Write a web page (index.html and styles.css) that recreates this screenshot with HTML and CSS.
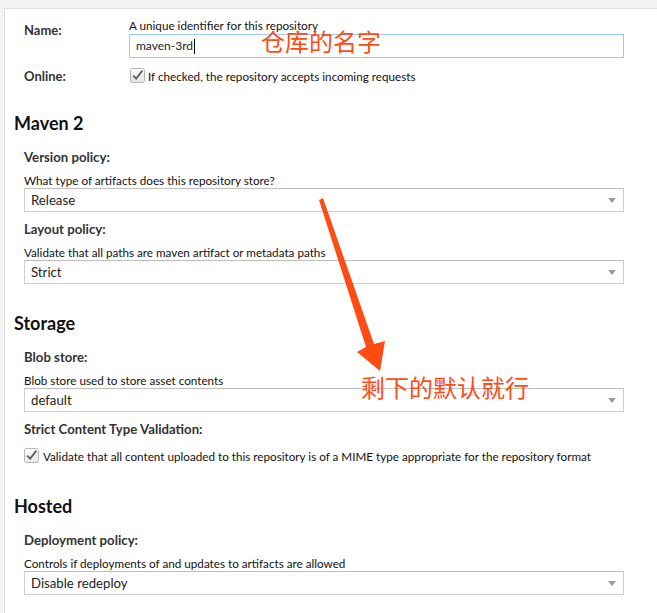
FILE: index.html
```html
<!DOCTYPE html>
<html>
<head>
<meta charset="utf-8">
<link rel="stylesheet" href="styles.css">
</head>
<body>
<div class="panel">
  <div class="row name-row">
    <div class="row-label">Name:</div>
    <div class="row-field">
      <div class="help">A unique identifier for this repository</div>
      <div class="input">maven-3rd<span class="caret"></span></div>
    </div>
  </div>
  <div class="row online-row">
    <div class="row-label">Online:</div>
    <div class="check-line">
      <svg class="cb" width="15" height="15" viewBox="0 0 15 15"><defs><linearGradient id="g1" x1="0" y1="0" x2="0" y2="1"><stop offset="0" stop-color="#fdfdfd"/><stop offset="1" stop-color="#e6e6e6"/></linearGradient></defs><rect x="0.5" y="0.5" width="14" height="14" rx="2" fill="url(#g1)" stroke="#b3b3b3"/><path d="M3.2 7.6 L6.2 10.6 L12.4 2.6" fill="none" stroke="#5f5f5f" stroke-width="1.8"/></svg>
      <span>If checked, the repository accepts incoming requests</span>
    </div>
  </div>

  <h2 class="section">Maven 2</h2>
  <div class="field">
    <div class="label">Version policy:</div>
    <div class="help">What type of artifacts does this repository store?</div>
    <div class="select">Release<span class="arrow"></span></div>
  </div>
  <div class="field">
    <div class="label">Layout policy:</div>
    <div class="help">Validate that all paths are maven artifact or metadata paths</div>
    <div class="select">Strict<span class="arrow"></span></div>
  </div>

  <h2 class="section storage">Storage</h2>
  <div class="field">
    <div class="label">Blob store:</div>
    <div class="help">Blob store used to store asset contents</div>
    <div class="select">default<span class="arrow"></span></div>
  </div>
  <div class="field">
    <div class="label">Strict Content Type Validation:</div>
    <div class="check-line check-block">
      <svg class="cb" width="15" height="15" viewBox="0 0 15 15"><defs><linearGradient id="g2" x1="0" y1="0" x2="0" y2="1"><stop offset="0" stop-color="#fdfdfd"/><stop offset="1" stop-color="#e6e6e6"/></linearGradient></defs><rect x="0.5" y="0.5" width="14" height="14" rx="2" fill="url(#g2)" stroke="#b3b3b3"/><path d="M3.2 7.6 L6.2 10.6 L12.4 2.6" fill="none" stroke="#5f5f5f" stroke-width="1.8"/></svg>
      <span>Validate that all content uploaded to this repository is of a MIME type appropriate for the repository format</span>
    </div>
  </div>

  <h2 class="section hosted">Hosted</h2>
  <div class="field">
    <div class="label">Deployment policy:</div>
    <div class="help">Controls if deployments of and updates to artifacts are allowed</div>
    <div class="select">Disable redeploy<span class="arrow"></span></div>
  </div>
</div>

<div class="note note-name">仓库的名字</div>
<svg class="red-arrow" width="657" height="613" viewBox="0 0 657 613"><polygon points="319,200 323,198 374,344 385,341 380,371 357,352 366,347" fill="#ff4b14"/></svg>
<div class="note note-rest">剩下的默认就行</div>
</body>
</html>
```

FILE: styles.css
```css
html, body {
  margin: 0;
  padding: 0;
}
body {
  background: #f3f3f3;
  width: 657px;
  height: 613px;
  overflow: hidden;
  position: relative;
  font-family: "Lato", "Liberation Sans", sans-serif;
  color: #222;
}
.panel {
  margin: 8px 0 0 4px;
  border-top: 1px solid #dcdcdc;
  border-left: 1px solid #dcdcdc;
  background: #fff;
  height: 620px;
  padding: 0 33px 0 9px;
  box-sizing: border-box;
}
.row {
  display: flex;
  padding-left: 10px;
}
.row-label {
  width: 105px;
  flex: none;
  font-size: 13px;
  font-weight: bold;
  color: #333;
  line-height: 14px;
}
.row-field {
  flex: 1;
}
.name-row {
  padding-top: 9px;
}
.name-row .row-label {
  padding-top: 5px;
}
.help {
  font-size: 11.7px;
  line-height: 14px;
  color: #111;
  height: 14px;
  white-space: nowrap;
}
.name-row .help {
  height: 15px;
  line-height: 15px;
}
.input {
  margin-top: 1px;
  height: 24px;
  box-sizing: border-box;
  border: 1px solid #9ec9ee;
  font-size: 12px;
  line-height: 22px;
  padding-left: 6px;
  color: #222;
  display: flex;
  align-items: center;
}
.caret {
  display: inline-block;
  width: 1px;
  height: 15px;
  background: #000;
  margin-left: 1px;
}
.online-row {
  margin-top: 10px;
  align-items: center;
  height: 15px;
}
.check-line {
  display: flex;
  align-items: center;
  font-size: 11.7px;
  color: #111;
  margin-left: 1px;
  white-space: nowrap;
}
.cb {
  flex: none;
  margin-right: 4px;
}
.online-row .cb {
  margin-right: 3px;
}
.section {
  margin: 30px 0 0 0;
  font-size: 18px;
  font-weight: bold;
  line-height: 20px;
  height: 20px;
  color: #111;
}
.section.storage {
  margin-top: 29px;
}
.section + .field {
  margin-top: 17px;
}
.field {
  padding-left: 10px;
  margin-top: 10px;
}
.label {
  font-size: 13.2px;
  font-weight: bold;
  color: #333;
  line-height: 14px;
  height: 14px;
  margin-bottom: 9px;
  white-space: nowrap;
}
.field .help {
  height: 15px;
}
.select {
  position: relative;
  height: 24px;
  box-sizing: border-box;
  border: 1px solid #cfcfcf;
  border-top-color: #bdbdbd;
  font-size: 13.2px;
  line-height: 22px;
  padding-left: 6px;
  color: #222;
}
.arrow {
  position: absolute;
  right: 7px;
  top: 9px;
  width: 0;
  height: 0;
  border-left: 4px solid transparent;
  border-right: 4px solid transparent;
  border-top: 5px solid #9a9a9a;
}
.check-block {
  margin-top: 12px;
  margin-left: 0;
  height: 15px;
}
.section.hosted {
  margin-top: 33px;
}
.note {
  position: absolute;
  font-family: "Noto Sans CJK SC", sans-serif;
  font-size: 24px;
  line-height: 24px;
  color: #ff4b14;
  font-weight: 400;
}
.note-name {
  left: 261px;
  top: 29px;
}
.note-rest {
  left: 361px;
  top: 375px;
}
.red-arrow {
  position: absolute;
  left: 0;
  top: 0;
  pointer-events: none;
}
```
